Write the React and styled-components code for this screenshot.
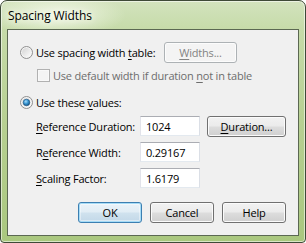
import styled, { createGlobalStyle, css } from 'styled-components';

const GlobalStyle = createGlobalStyle`
  html, body {
    margin: 0;
    padding: 0;
    background: #ffffff;
  }
  body {
    font-family: 'Open Sans', 'Noto Sans', sans-serif;
    font-size: 11px;
    letter-spacing: -0.2px;
    color: #000;
  }
`;

function Radio({ checked }) {
  const id = checked ? 'on' : 'off';
  return (
    <RadioIcon width="13" height="13" viewBox="0 0 13 13">
      <defs>
        <linearGradient id={`ring-${id}`} x1="0" y1="0" x2="1" y2="1">
          <stop offset="0" stopColor="#d4d4d4" />
          <stop offset="1" stopColor="#fcfcfc" />
        </linearGradient>
        <radialGradient id={`dot-${id}`} cx="0.4" cy="0.35" r="0.7">
          <stop offset="0" stopColor="#a9dcf8" />
          <stop offset="0.45" stopColor="#3d9ad6" />
          <stop offset="1" stopColor="#0e4a7a" />
        </radialGradient>
      </defs>
      <circle cx="6.5" cy="6.5" r="6" fill="#f4f4f4" stroke="#8f8f8f" strokeWidth="1" />
      <circle cx="6.5" cy="6.5" r="4.5" fill={`url(#ring-${id})`} />
      {checked && <circle cx="6.5" cy="6.5" r="3.3" fill={`url(#dot-${id})`} stroke="#1c5280" strokeWidth="0.6" />}
    </RadioIcon>
  );
}

export default function App() {
  return (
    <>
      <GlobalStyle />
      <Window>
        <TitleBar>
          <Title>Spacing Widths</Title>
        </TitleBar>
        <Body>
          <TopRow>
            <Option $width={144}>
              <Radio />
              <span>Use spacing width <Key>t</Key>able:</span>
            </Option>
            <Button $disabled $width={73}>
              <Key>W</Key>idths...
            </Button>
          </TopRow>
          <CheckRow>
            <CheckBox />
            <span>Use default width if duration <Key>n</Key>ot in table</span>
          </CheckRow>
          <ValuesRow>
            <Radio checked />
            <span>Use these <Key>v</Key>alues:</span>
          </ValuesRow>
          <Fields>
            <Label><Key>R</Key>eference Duration:</Label>
            <Field>1024</Field>
            <Button $width={79} $gap>
              <Key>D</Key>uration...
            </Button>
            <Label>R<Key>e</Key>ference Width:</Label>
            <Field>0.29167</Field>
            <span />
            <Label><Key>S</Key>caling Factor:</Label>
            <Field>1.6179</Field>
            <span />
          </Fields>
          <Footer>
            <Button $default $width={64}>OK</Button>
            <Button $width={64}>Cancel</Button>
            <Button $width={64}>Help</Button>
          </Footer>
        </Body>
      </Window>
    </>
  );
}

const Window = styled.div`
  width: 306px;
  height: 243px;
  box-sizing: border-box;
  border: 1px solid #3e4a37;
  border-radius: 7px 7px 4px 4px;
  padding: 0 6px 6px 6px;
  display: flex;
  flex-direction: column;
  background:
    radial-gradient(ellipse 70px 22px at 55px 14px, rgba(246, 250, 236, 0.9), rgba(246, 250, 236, 0) 100%),
    linear-gradient(180deg, #d3e3be 0px, #c6dba9 28px, #b7d092 120px, #a9c77e 243px);
  box-shadow: inset 0 0 0 1px rgba(255, 255, 255, 0.55);
`;

const TitleBar = styled.div`
  height: 28px;
  display: flex;
  align-items: center;
  padding-left: 1px;
`;

const Title = styled.span`
  font-size: 12px;
  letter-spacing: -0.1px;
  color: #000;
  text-shadow: 0 0 6px #f4f8ea, 0 0 8px #f4f8ea;
`;

const Body = styled.div`
  flex: 1;
  background: #f0f0f0;
  border: 1px solid #5b6852;
  padding: 12px 12px 0 12px;
  display: flex;
  flex-direction: column;
`;

const Key = styled.span`
  text-decoration: underline;
  text-underline-offset: 2px;
`;

const RadioIcon = styled.svg`
  flex: none;
  display: block;
  margin-right: 3px;
`;

const TopRow = styled.div`
  display: flex;
  align-items: center;
  height: 21px;
`;

const Option = styled.div`
  display: flex;
  align-items: center;
  width: ${p => (p.$width ? `${p.$width}px` : 'auto')};
  white-space: nowrap;
`;

const CheckRow = styled.div`
  display: flex;
  align-items: center;
  height: 13px;
  margin-top: 6px;
  margin-left: 17px;
  color: #6d6d6d;
  white-space: nowrap;
`;

const CheckBox = styled.span`
  width: 13px;
  height: 13px;
  box-sizing: border-box;
  border: 1px solid #b1b1b1;
  background: #f4f4f4;
  box-shadow: inset 0 0 0 1px #f9f9f9;
  margin-right: 3px;
  flex: none;
`;

const ValuesRow = styled.div`
  display: flex;
  align-items: center;
  height: 13px;
  margin-top: 14px;
  white-space: nowrap;
`;

const Fields = styled.div`
  display: grid;
  grid-template-columns: 104px 60px auto;
  grid-auto-rows: 21px;
  row-gap: 5px;
  align-items: start;
  margin-top: 7px;
  margin-left: 16px;
`;

const Label = styled.div`
  height: 20px;
  display: flex;
  align-items: center;
  white-space: nowrap;
`;

const Field = styled.div`
  height: 20px;
  box-sizing: border-box;
  background: #fff;
  border: 1px solid;
  border-color: #abadb3 #dbdfe6 #e3e9ef #e2e3ea;
  padding: 0 5px;
  display: flex;
  align-items: center;
`;

const Footer = styled.div`
  display: flex;
  justify-content: flex-end;
  gap: 8px;
  margin-top: 13px;
`;

const Button = styled.div`
  width: ${p => p.$width}px;
  height: 21px;
  box-sizing: border-box;
  margin-left: ${p => (p.$gap ? '7px' : '0')};
  border: 1px solid #707070;
  border-radius: 3px;
  display: flex;
  align-items: center;
  justify-content: center;
  color: #000;
  background: linear-gradient(180deg, #f2f2f2 0%, #ebebeb 48%, #dddddd 52%, #cfcfcf 100%);
  box-shadow: inset 0 0 0 1px #fbfbfb;
  white-space: nowrap;
  ${p => p.$default && css`
    border-color: #3c7fb1;
    background: linear-gradient(180deg, #eaf3f9 0%, #e1edf5 48%, #d0e2ee 52%, #c2d8e8 100%);
    box-shadow: inset 0 0 0 1px #a6dcf7, inset 0 0 0 2px rgba(255,255,255,0.4);
  `}
  ${p => p.$disabled && css`
    border-color: #adb2b5;
    color: #838383;
    background: #f4f4f4;
    box-shadow: inset 0 0 0 1px #fcfcfc;
  `}
`;
